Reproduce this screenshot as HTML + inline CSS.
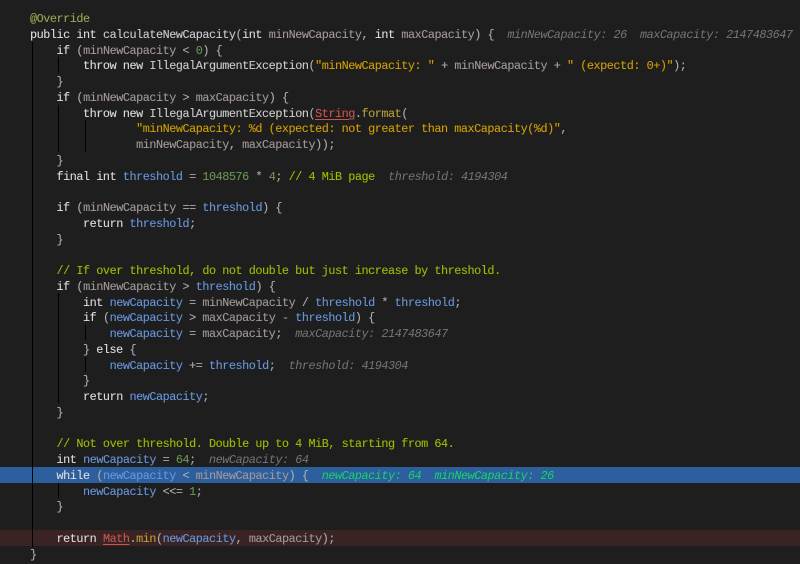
<!DOCTYPE html>
<html><head><meta charset="utf-8">
<style>
html,body{margin:0;padding:0;background:#1e1e1e;width:800px;height:564px;overflow:hidden}
#c{position:absolute;left:30px;top:12.2px;font:11.8px/15.76px "Liberation Mono",monospace;letter-spacing:-.45px;color:#adadad;-webkit-text-stroke:.1px currentColor;filter:blur(.35px)}
#c div{height:15.76px;white-space:pre}
.bar{position:absolute;left:0;width:800px}
.g{position:absolute;width:1px;background:#000}
b{font-weight:normal;color:#dedede}
i.h{font-style:italic;color:#767676;-webkit-text-stroke:0}
i.n{font-style:italic;color:#12d868;-webkit-text-stroke:0}
u{text-decoration:underline;color:#c95550;text-underline-offset:2px}
.p{color:#a39898}
.f{color:#6796dc}
.s{color:#d29e00}
.c{color:#9dbd00}
.d{color:#68964f}
.m{color:#bb9f35}
.a{color:#9da352}
.w{color:#cccccc}
</style></head><body>
<div class="bar" style="top:467px;height:15.5px;background:#2d5f9e"></div>
<div class="bar" style="top:530px;height:15.7px;background:#3a2323"></div>
<div class="g" style="left:32px;top:42px;height:505px"></div>
<div class="g" style="left:58px;top:57px;height:16px"></div>
<div class="g" style="left:58px;top:105px;height:47px"></div>
<div class="g" style="left:85px;top:120px;height:32px"></div>
<div class="g" style="left:58px;top:293px;height:110px"></div>
<div class="g" style="left:85px;top:325px;height:15px"></div>
<div class="g" style="left:85px;top:357px;height:15px"></div>
<div class="g" style="left:58px;top:483px;height:15px"></div>
<div id="c"><div><span class="a">@Override</span></div><div><b>public int</b> <span class="w">calculateNewCapacity</span>(<b>int</b> <span class="p">minNewCapacity</span>, <b>int</b> <span class="p">maxCapacity</span>) {  <i class="h">minNewCapacity: 26  maxCapacity: 2147483647</i></div><div>    <b>if</b> (<span class="p">minNewCapacity</span> &lt; <span class="d">0</span>) {</div><div>        <b>throw new</b> <span class="w">IllegalArgumentException</span>(<span class="s">"minNewCapacity: "</span> + <span class="p">minNewCapacity</span> + <span class="s">" (expectd: 0+)"</span>);</div><div>    }</div><div>    <b>if</b> (<span class="p">minNewCapacity</span> &gt; <span class="p">maxCapacity</span>) {</div><div>        <b>throw new</b> <span class="w">IllegalArgumentException</span>(<u>String</u>.<span class="m">format</span>(</div><div>                <span class="s">"minNewCapacity: %d (expected: not greater than maxCapacity(%d)"</span>,</div><div>                <span class="p">minNewCapacity</span>, <span class="p">maxCapacity</span>));</div><div>    }</div><div>    <b>final int</b> <span class="f">threshold</span> = <span class="d">1048576</span> * <span class="d">4</span>; <span class="c">// 4 MiB page</span>  <i class="h">threshold: 4194304</i></div><div></div><div>    <b>if</b> (<span class="p">minNewCapacity</span> == <span class="f">threshold</span>) {</div><div>        <b>return</b> <span class="f">threshold</span>;</div><div>    }</div><div></div><div>    <span class="c">// If over threshold, do not double but just increase by threshold.</span></div><div>    <b>if</b> (<span class="p">minNewCapacity</span> &gt; <span class="f">threshold</span>) {</div><div>        <b>int</b> <span class="f">newCapacity</span> = <span class="p">minNewCapacity</span> / <span class="f">threshold</span> * <span class="f">threshold</span>;</div><div>        <b>if</b> (<span class="f">newCapacity</span> &gt; <span class="p">maxCapacity</span> - <span class="f">threshold</span>) {</div><div>            <span class="f">newCapacity</span> = <span class="p">maxCapacity</span>;  <i class="h">maxCapacity: 2147483647</i></div><div>        } <b>else</b> {</div><div>            <span class="f">newCapacity</span> += <span class="f">threshold</span>;  <i class="h">threshold: 4194304</i></div><div>        }</div><div>        <b>return</b> <span class="f">newCapacity</span>;</div><div>    }</div><div></div><div>    <span class="c">// Not over threshold. Double up to 4 MiB, starting from 64.</span></div><div>    <b>int</b> <span class="f">newCapacity</span> = <span class="d">64</span>;  <i class="h">newCapacity: 64</i></div><div>    <b>while</b> (<span class="f">newCapacity</span> &lt; <span class="p">minNewCapacity</span>) {  <i class="n">newCapacity: 64  minNewCapacity: 26</i></div><div>        <span class="f">newCapacity</span> &lt;&lt;= <span class="d">1</span>;</div><div>    }</div><div></div><div>    <b>return</b> <u>Math</u>.<span class="m">min</span>(<span class="f">newCapacity</span>, <span class="p">maxCapacity</span>);</div><div>}</div></div>
</body></html>
